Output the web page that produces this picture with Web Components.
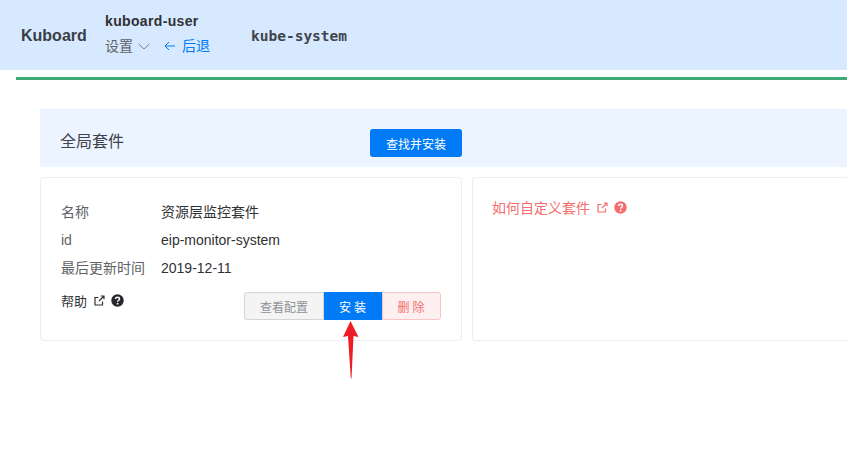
<!DOCTYPE html>
<html>
<head>
<meta charset="utf-8">
<title>Kuboard</title>
<style>
  html, body { margin: 0; height: 100%; overflow: hidden; background: #fff; }
  body { font-family: "Liberation Sans", "Noto Sans CJK SC", sans-serif; font-size: 14px; color: #303133; }
</style>
</head>
<body>
<kb-header></kb-header>
<kb-page>
  <kb-suite-card>
    <kb-field label="名称" cjk>资源层监控套件</kb-field>
    <kb-field label="id">eip-monitor-system</kb-field>
    <kb-field label="最后更新时间" cjk-label>2019-12-11</kb-field>
  </kb-suite-card>
  <kb-note-card></kb-note-card>
</kb-page>

<script>
// shared icon markup
const linkIcon = `<svg width="11" height="11" viewBox="0 0 11 11" fill="none" stroke="currentColor" stroke-width="1.2">
  <path d="M8.5 6.5V10H1V2.5H4.5"/><path d="M5 6L10 1M6.8 1H10V4.2"/></svg>`;

const helpIcon = (bg) => `<svg width="13" height="13" viewBox="0 0 13 13">
  <circle cx="6.5" cy="6.5" r="6.2" fill="${bg}"/>
  <path d="M4.5 5.1C4.5 3.9 5.4 3.2 6.5 3.2S8.5 3.9 8.5 4.9C8.5 6.2 6.6 6.3 6.6 7.8" fill="none" stroke="#fff" stroke-width="1.4"/>
  <circle cx="6.6" cy="9.7" r=".9" fill="#fff"/></svg>`;

class KbHeader extends HTMLElement {
  constructor() {
    super();
    this.attachShadow({ mode: 'open' });
    this.shadowRoot.innerHTML = `
    <style>
      :host { display: flex; align-items: center; height: 70px; background: #d7e9ff; padding-left: 21px; box-sizing: border-box; }
      .logo { font-size: 16px; font-weight: bold; color: #3a3f46; width: 84px; margin-top: 2px; }
      .user { display: flex; flex-direction: column; width: 146px; margin-top: -2px; }
      .name { font-size: 14px; font-weight: bold; letter-spacing: .35px; color: #303133; line-height: 20px; }
      .row { display: flex; align-items: center; line-height: 22px; margin-top: 4px; }
      .settings { color: #606266; font-size: 14px; }
      .chev { margin: 1px 14px 0 5px; color: #7d8288; }
      .back { color: #007af5; font-size: 14px; display: flex; align-items: center; gap: 6px; }
      .ns { font-family: "DejaVu Sans Mono", monospace; font-weight: bold; font-size: 14.5px; color: #40454c; margin-top: 2px; }
    </style>
    <div class="logo">Kuboard</div>
    <div class="user">
      <div class="name">kuboard-user</div>
      <div class="row">
        <span class="settings">设置</span>
        <svg class="chev" width="12" height="7" viewBox="0 0 12 7" fill="none" stroke="currentColor"><path d="M.5.8L6 6L11.5.8"/></svg>
        <span class="back">
          <svg width="12" height="10" viewBox="0 0 12 10" fill="none" stroke="currentColor"><path d="M11 5H1M5 1L1 5L5 9"/></svg>
          后退
        </span>
      </div>
    </div>
    <div class="ns">kube-system</div>`;
  }
}

class KbPage extends HTMLElement {
  constructor() {
    super();
    this.attachShadow({ mode: 'open' });
    this.shadowRoot.innerHTML = `
    <style>
      :host { display: block; padding: 7px 0 0 16px; position: relative; }
      .rule { height: 3px; background: #3fa877; margin-bottom: 29px; }
      .content { margin-left: 24px; }
      .head { display: flex; align-items: flex-start; height: 58px; box-sizing: border-box; padding: 20px 0 0 20px; background: #ecf5ff; }
      .title { font-size: 16px; line-height: 24px; color: #40434a; width: 310px; margin-top: 1px; }
      .find { width: 92px; height: 28px; background: #007af5; color: #fff; font-size: 12px;
        border-radius: 3px; display: flex; align-items: center; justify-content: center; }
      .cards { display: flex; gap: 10px; margin-top: 10px; }
      .arrow { position: absolute; left: 342px; top: 251px; }
    </style>
    <div class="rule"></div>
    <div class="content">
      <div class="head">
        <div class="title">全局套件</div>
        <div class="find">查找并安装</div>
      </div>
      <div class="cards"><slot></slot></div>
    </div>
    <svg class="arrow" width="18" height="58" viewBox="0 0 18 58">
      <path d="M8.5 0L16.5 16L11.5 15L9.5 57.5L8.8 57.5L6 15L1 16Z" fill="#ee1c25"/>
    </svg>`;
  }
}

class KbSuiteCard extends HTMLElement {
  constructor() {
    super();
    this.attachShadow({ mode: 'open' });
    this.shadowRoot.innerHTML = `
    <style>
      :host { display: block; flex: none; width: 422px; height: 164px; box-sizing: border-box;
        border: 1px solid #ebeef5; border-radius: 4px; padding: 20px 20px 0; background: #fff; }
      .foot { display: flex; justify-content: space-between; margin-top: 6px; }
      .help { display: flex; align-items: center; gap: 6px; height: 24px; font-size: 13px; color: #303133; }
      .help span { margin-right: 1px; }
      .help svg:first-of-type { margin-top: 1px; }
      .btns { display: flex; margin-top: 4px; }
      .btn { height: 28px; box-sizing: border-box; border: 1px solid; font-size: 12px; display: flex; align-items: center; justify-content: center; }
      .view { width: 80px; background: #f4f4f5; border-color: #d3d4d6; color: #909399; border-radius: 3px 0 0 3px; }
      .install { width: 58px; background: #007af5; border-color: #007af5; color: #fff; letter-spacing: 3px; padding-left: 2px; }
      .del { width: 59px; background: #fef0f0; border-color: #fbc4c4; color: #f56c6c; border-radius: 0 3px 3px 0; letter-spacing: 3px; padding-left: 2px; }
    </style>
    <slot></slot>
    <div class="foot">
      <div class="help"><span>帮助</span>${linkIcon}${helpIcon('#27282b')}</div>
      <div class="btns">
        <div class="btn view">查看配置</div>
        <div class="btn install">安装</div>
        <div class="btn del">删除</div>
      </div>
    </div>`;
  }
}

class KbField extends HTMLElement {
  constructor() {
    super();
    this.attachShadow({ mode: 'open' });
    this.shadowRoot.innerHTML = `
    <style>
      :host { display: flex; height: 28px; align-items: center; font-size: 14px; }
      .label { width: 100px; color: #606266; }
      .val { color: #303133; }
      /* CJK glyphs sit a pixel lower than the latin ones */
      :host([cjk]) .label, :host([cjk]) .val, :host([cjk-label]) .label { margin-top: -2px; }
    </style>
    <div class="label"></div>
    <div class="val"><slot></slot></div>`;
    this.shadowRoot.querySelector('.label').textContent = this.getAttribute('label') || '';
  }
}

class KbNoteCard extends HTMLElement {
  constructor() {
    super();
    this.attachShadow({ mode: 'open' });
    this.shadowRoot.innerHTML = `
    <style>
      :host { display: block; flex: 1; min-width: 0; height: 164px; box-sizing: border-box;
        border: 1px solid #ebeef5; border-right: none; border-radius: 4px 0 0 4px; padding: 19px 0 0 19px; background: #fff; }
      .note { display: flex; align-items: center; gap: 6px; height: 20px; color: #f56c6c; font-size: 14px; }
      .note span { margin-right: 1px; }
    </style>
    <div class="note"><span>如何自定义套件</span>${linkIcon}${helpIcon('#f56c6c')}</div>`;
  }
}

customElements.define('kb-header', KbHeader);
customElements.define('kb-page', KbPage);
customElements.define('kb-suite-card', KbSuiteCard);
customElements.define('kb-field', KbField);
customElements.define('kb-note-card', KbNoteCard);
</script>
</body>
</html>
